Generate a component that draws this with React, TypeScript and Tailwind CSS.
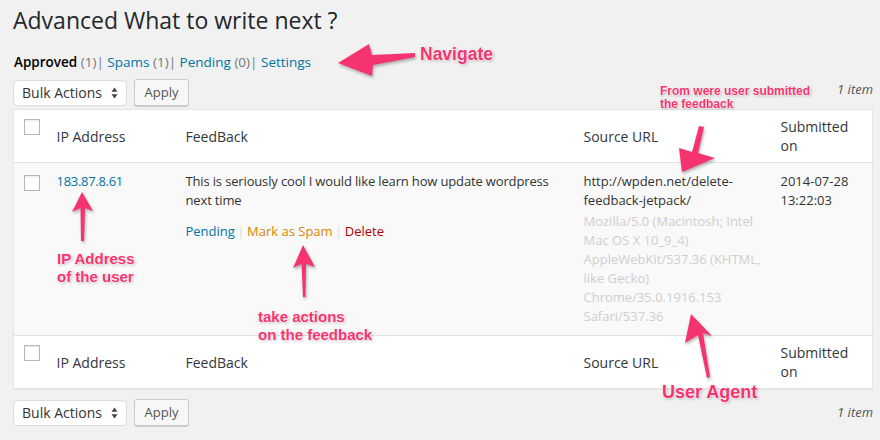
const pink = "#f5336e";

const headers = ["IP Address", "FeedBack", "Source URL", "Submitted on"];

export default function App() {
  return (
    <div className="relative w-[880px] h-[440px] overflow-hidden bg-[#f1f1f1] pl-[13px] pr-[7px] font-['Open_Sans',sans-serif] text-[#333]">
      <h1 className="pt-[6px] text-[23px] leading-[29px] text-[#23282d]">
        Advanced What to write next ?
      </h1>

      <SubNav />

      <TableNav className="mt-[7px]" countClass="-mt-[5px]" />

      <table className="mt-[3px] w-full table-fixed border-collapse border border-[#e5e5e5] bg-white shadow-[0_1px_1px_rgba(0,0,0,0.04)] text-[14px] leading-[19px]">
        <colgroup>
          <col className="w-[33px]" />
          <col className="w-[129px]" />
          <col className="w-[398px]" />
          <col className="w-[197px]" />
          <col />
        </colgroup>
        <thead>
          <HeadRow border="border-b" />
        </thead>
        <tbody>
          <tr className="bg-[#f9f9f9] align-top">
            <td className="pl-[10px] pt-[12px]">
              <Checkbox />
            </td>
            <td className="px-[10px] py-[9px] text-[13px] tracking-[-0.3px]">
              <a className="text-[#0074a2]">183.87.8.61</a>
            </td>
            <td className="px-[10px] py-[9px] text-[13px]">
              <p className="tracking-[-0.15px]">
                This is seriously cool I would like learn how update wordpress
                <br />
                next time
              </p>
              <div className="mt-[12px] flex items-center">
                <a className="text-[#0074a2]">Pending</a>
                <span className="mx-[2.5px] text-[#ddd]">|</span>
                <a className="text-[#d98500]">Mark as Spam</a>
                <span className="mx-[2.5px] text-[#ddd]">|</span>
                <a className="text-[#a00]">Delete</a>
              </div>
            </td>
            <td className="px-[10px] py-[9px] text-[13px]">
              <div>
                http://wpden.net/delete-
                <br />
                feedback-jetpack/
              </div>
              <div className="mt-[2px] text-[#cfcfcf]">
                Mozilla/5.0 (Macintosh; Intel
                <br />
                Mac OS X 10_9_4)
                <br />
                AppleWebKit/537.36 (KHTML,
                <br />
                like Gecko)
                <br />
                Chrome/35.0.1916.153
                <br />
                Safari/537.36
              </div>
            </td>
            <td className="px-[10px] py-[9px] text-[13px]">
              2014-07-28
              <br />
              13:22:03
            </td>
          </tr>
        </tbody>
        <tfoot>
          <HeadRow border="border-t" />
        </tfoot>
      </table>

      <TableNav className="mt-[10px]" countClass="" />

      <Annotations />
    </div>
  );
}

function SubNav() {
  return (
    <ul className="mt-[18px] flex text-[13.5px] leading-[19px] pl-px">
      <li>
        <span className="font-semibold text-black">Approved</span>{" "}
        <span className="text-[#777]">(1)</span>
        <span className="text-[#777]">|&nbsp;</span>
      </li>
      <li>
        <a className="text-[#0074a2]">Spams</a>{" "}
        <span className="text-[#777]">(1)</span>
        <span className="text-[#777]">|&nbsp;</span>
      </li>
      <li>
        <a className="text-[#0074a2]">Pending</a>{" "}
        <span className="text-[#777]">(0)</span>
        <span className="text-[#777]">|&nbsp;</span>
      </li>
      <li>
        <a className="text-[#0074a2]">Settings</a>
      </li>
    </ul>
  );
}

function TableNav({ className, countClass }: { className: string; countClass: string }) {
  return (
    <div className={`${className} flex h-[27px] items-center gap-[7px]`}>
      <div className="flex h-[26px] w-[114px] items-center justify-between rounded-[4px] border border-[#ddd] bg-white pl-[8px] pr-[8px] text-[14px] text-[#333] shadow-[inset_0_1px_2px_rgba(0,0,0,0.04)]">
        <span>Bulk Actions</span>
        <svg width="7" height="12" viewBox="0 0 7 12" aria-hidden>
          <path d="M3.5 0.5 L6.5 4.8 H0.5 Z" fill="#444" />
          <path d="M3.5 11.5 L6.5 7.2 H0.5 Z" fill="#444" />
        </svg>
      </div>
      <button className="h-[27px] w-[55px] rounded-[3px] border border-[#ccc] bg-[#f7f7f7] text-[13px] text-[#555] shadow-[0_1px_0_#ccc]">
        Apply
      </button>
      <span className={`ml-auto text-[13px] italic text-[#555] ${countClass}`}>1 item</span>
    </div>
  );
}

function HeadRow({ border }: { border: string }) {
  return (
    <tr className={`${border} border-[#e1e1e1] bg-white`}>
      <th className="pl-[10px] pt-[9px] align-top">
        <Checkbox />
      </th>
      {headers.map((h) => (
        <th key={h} className="px-[10px] py-[7px] text-left font-normal align-middle text-[#32373c]">
          {h === "Submitted on" ? (
            <>
              Submitted
              <br />
              on
            </>
          ) : (
            h
          )}
        </th>
      ))}
    </tr>
  );
}

function Checkbox() {
  return (
    <span className="block h-4 w-4 border border-[#b4b9be] bg-white shadow-[inset_0_1px_2px_rgba(0,0,0,0.1)]" />
  );
}

function Annotations() {
  // Skitch-style callouts drawn over the page
  const label =
    "absolute font-['Liberation_Sans',Arial,sans-serif] font-bold text-[#f5336e] whitespace-nowrap [text-shadow:0_0_1px_#fff,0_0_2px_#fff,0_0_2px_#fff,1px_1px_3px_rgba(0,0,0,0.35)]";
  return (
    <>
      <svg
        aria-hidden
        width="880"
        height="440"
        viewBox="0 0 880 440"
        className="pointer-events-none absolute left-0 top-0 [filter:drop-shadow(1px_2px_1.5px_rgba(0,0,0,0.3))]"
      >
        <g fill={pink}>
          <polygon points="338,63 369,44 372,55 415,53 415,57 373,65 372,76" />
          <polygon points="699,126 704,127 698,153 715,158 682,172 679,148 692,152" />
          <polygon points="82,192 93,211 85,208 84,241 81,241 80.5,208 72,212" />
          <polygon points="303,245 315,267 306,264 305.5,297 303,297 301.5,264 293,268" />
          <polygon points="691,314 712,336 703,333 710,377 707,378 698,335 685,343" />
        </g>
      </svg>

      <div className={`${label} left-[420px] top-[44px] text-[17.5px] leading-[20px]`}>Navigate</div>
      <div className={`${label} left-[660px] top-[85px] text-[12px] leading-[13px]`}>
        From were user submitted
        <br />
        the feedback
      </div>
      <div className={`${label} left-[57px] top-[250px] text-[15px] leading-[18px]`}>
        IP Address
        <br />
        of the user
      </div>
      <div className={`${label} left-[258px] top-[308px] text-[15px] leading-[18px]`}>
        take actions
        <br />
        on the feedback
      </div>
      <div className={`${label} left-[662px] top-[382px] text-[18px] leading-[21px]`}>User Agent</div>
    </>
  );
}
